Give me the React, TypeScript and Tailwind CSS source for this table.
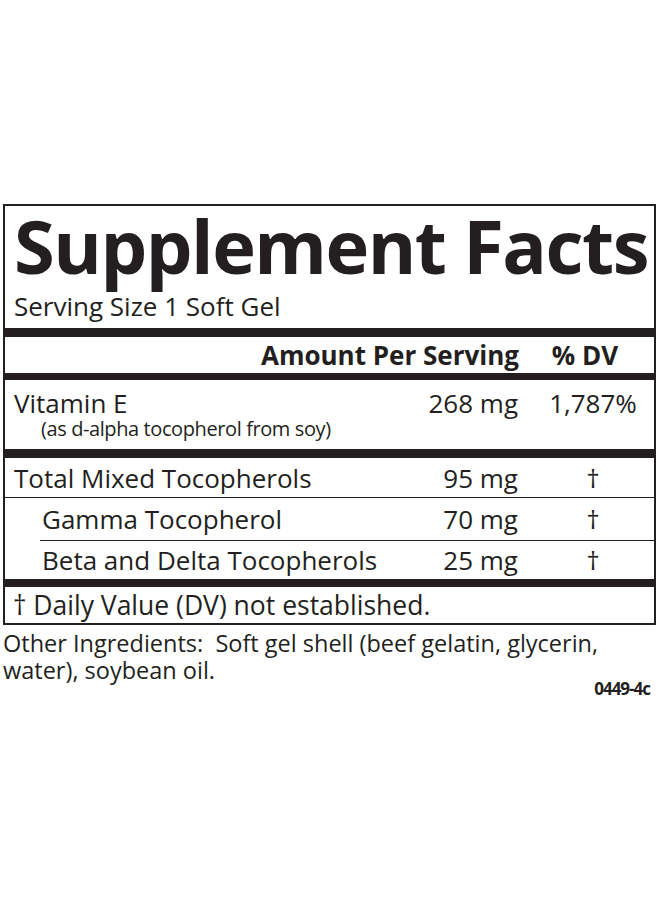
import React from "react";

const Bar = ({ h }: { h: string }) => <div className={`${h} bg-[#231f20]`} />;

// one nutrient line: name, amount (right aligned), %DV (centered)
const Row = ({
  name,
  amount,
  dv,
  className,
}: {
  name: string;
  amount: string;
  dv: string;
  className: string;
}) => (
  <div className={`flex items-center leading-none ${className}`}>
    <div className="flex-1 whitespace-nowrap">{name}</div>
    <div className="w-[130px] text-right whitespace-nowrap">{amount}</div>
    <div className="w-[25px]" />
    <div className="w-[100px] text-center">{dv}</div>
    <div className="w-[11px]" />
  </div>
);

const App = () => {
  return (
    <div
      className="w-[660px] h-[900px] bg-white text-[#231f20]"
      style={{ fontFamily: '"Open Sans", "Noto Sans", sans-serif' }}
    >
      <div className="pt-[204px] pl-[3px]">
        <div className="w-[653px] border-2 border-[#231f20]">
          <div className="h-[122px] px-[9px] flex flex-col">
            <div className="text-[74px] font-bold leading-none tracking-[-1.5px] mt-[3px] whitespace-nowrap">
              Supplement Facts
            </div>
            <div className="text-[26px] leading-none mt-[10px]">
              Serving Size 1 Soft Gel
            </div>
          </div>
          <Bar h="h-[9px]" />
          <div className="h-[36px] flex items-center justify-end text-[26px] font-bold leading-none">
            <div className="whitespace-nowrap">Amount Per Serving</div>
            <div className="w-[24px]" />
            <div className="w-[100px] text-center pr-[16px] whitespace-nowrap">% DV</div>
            <div className="w-[11px]" />
          </div>
          <Bar h="h-[7px]" />
          <div className="h-[69px] flex flex-col pl-[9px] pt-[10px] text-[26px]">
            <Row className="" name="Vitamin E" amount="268 mg" dv="1,787%" />
            <div className="text-[20px] leading-none mt-[3px] pl-[27px] tracking-[-0.4px] whitespace-nowrap">
              (as d-alpha tocopherol from soy)
            </div>
          </div>
          <Bar h="h-[9px]" />
          <div className="text-[26px]">
            <Row
              className="h-[40px] pl-[9px] border-b border-[#231f20]"
              name="Total Mixed Tocopherols"
              amount="95 mg"
              dv="†"
            />
            <div className="pl-[35px]">
              <Row
                className="h-[43px] pl-[2px] border-b border-[#231f20]"
                name="Gamma Tocopherol"
                amount="70 mg"
                dv="†"
              />
              <Row
                className="h-[38px] pl-[2px]"
                name="Beta and Delta Tocopherols"
                amount="25 mg"
                dv="†"
              />
            </div>
          </div>
          <Bar h="h-[8px]" />
          <div className="h-[36px] flex items-center pl-[8px] text-[26.5px] leading-none whitespace-nowrap">
            † Daily Value (DV) not established.
          </div>
        </div>
        <div className="pt-[5px] text-[23.5px] leading-[27px] whitespace-nowrap">
          Other Ingredients:&nbsp; Soft gel shell (beef gelatin, glycerin,
          <br />
          water), soybean oil.
        </div>
        <div className="-mt-[4px] w-[647px] text-right text-[17px] font-bold tracking-[-1px] leading-none">
          0449-4c
        </div>
      </div>
    </div>
  );
};

export default App;
